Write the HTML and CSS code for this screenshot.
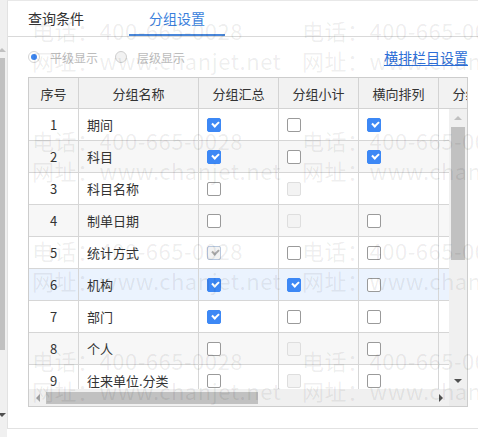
FILE: index.html
```html
<!DOCTYPE html>
<html lang="zh">
<head>
<meta charset="utf-8">
<title>分组设置</title>
<link rel="stylesheet" href="styles.css">
</head>
<body>
<div class="app">
  <div class="side">
    <div class="tri tri-up light"></div>
    <div class="side-thumb"></div>
    <div class="tri tri-down dark side-down"></div>
  </div>
  <div class="panel">
    <div class="tabs">
      <div class="tab">查询条件</div>
      <div class="tab active">分组设置</div>
    </div>
    <div class="content">
      <div class="toolbar">
        <div class="radio checked"><span class="ring"></span>平级显示</div>
        <div class="radio"><span class="ring"></span>层级显示</div>
        <a class="link">横排栏目设置</a>
      </div>
      <div class="grid">
        <div class="head">
          <div class="hc">序号</div>
          <div class="hc">分组名称</div>
          <div class="hc">分组汇总</div>
          <div class="hc">分组小计</div>
          <div class="hc">横向排列</div>
          <div class="hc">分组排序</div>
        </div>
        <div class="body">
          <div class="main">
            <div class="viewport">
              <div class="row">
                <div class="c num">1</div><div class="c name">期间</div>
                <div class="c ck"><span class="cb on"></span></div>
                <div class="c ck"><span class="cb"></span></div>
                <div class="c ck"><span class="cb on"></span></div>
                <div class="c"></div>
              </div>
              <div class="row alt">
                <div class="c num">2</div><div class="c name">科目</div>
                <div class="c ck"><span class="cb on"></span></div>
                <div class="c ck"><span class="cb"></span></div>
                <div class="c ck"><span class="cb on"></span></div>
                <div class="c"></div>
              </div>
              <div class="row">
                <div class="c num">3</div><div class="c name">科目名称</div>
                <div class="c ck"><span class="cb"></span></div>
                <div class="c ck"><span class="cb dis"></span></div>
                <div class="c ck"></div>
                <div class="c"></div>
              </div>
              <div class="row alt">
                <div class="c num">4</div><div class="c name">制单日期</div>
                <div class="c ck"><span class="cb"></span></div>
                <div class="c ck"><span class="cb dis"></span></div>
                <div class="c ck"><span class="cb"></span></div>
                <div class="c"></div>
              </div>
              <div class="row">
                <div class="c num">5</div><div class="c name">统计方式</div>
                <div class="c ck"><span class="cb dis-on"></span></div>
                <div class="c ck"><span class="cb"></span></div>
                <div class="c ck"><span class="cb"></span></div>
                <div class="c"></div>
              </div>
              <div class="row sel">
                <div class="c num">6</div><div class="c name">机构</div>
                <div class="c ck"><span class="cb on"></span></div>
                <div class="c ck"><span class="cb on"></span></div>
                <div class="c ck"><span class="cb"></span></div>
                <div class="c"></div>
              </div>
              <div class="row">
                <div class="c num">7</div><div class="c name">部门</div>
                <div class="c ck"><span class="cb on"></span></div>
                <div class="c ck"><span class="cb"></span></div>
                <div class="c ck"><span class="cb"></span></div>
                <div class="c"></div>
              </div>
              <div class="row alt">
                <div class="c num">8</div><div class="c name">个人</div>
                <div class="c ck"><span class="cb"></span></div>
                <div class="c ck"><span class="cb dis"></span></div>
                <div class="c ck"><span class="cb"></span></div>
                <div class="c"></div>
              </div>
              <div class="row">
                <div class="c num">9</div><div class="c name">往来单位.分类</div>
                <div class="c ck"><span class="cb"></span></div>
                <div class="c ck"><span class="cb dis"></span></div>
                <div class="c ck"><span class="cb"></span></div>
                <div class="c"></div>
              </div>
            </div>
            <div class="vscroll">
              <div class="btn"><span class="tri tri-up light"></span></div>
              <div class="vthumb"></div>
              <div class="btn vdown"><span class="tri tri-down dark"></span></div>
            </div>
          </div>
          <div class="hscroll">
            <div class="htrack">
              <div class="btn hbtn"><span class="tri tri-left mid"></span></div>
              <div class="hthumb"></div>
              <div class="btn hbtn hright"><span class="tri tri-right dark"></span></div>
            </div>
            <div class="corner"></div>
          </div>
        </div>
      </div>
    </div>
  </div>
</div>
<div class="watermark">
  <div class="wm"><div>电话：400-665-0028</div><div>网址：www.chanjet.net</div></div>
  <div class="wm"><div>电话：400-665-0028</div><div>网址：www.chanjet.net</div></div>
  <div class="wm"><div>电话：400-665-0028</div><div>网址：www.chanjet.net</div></div>
  <div class="wm"><div>电话：400-665-0028</div><div>网址：www.chanjet.net</div></div>
  <div class="wm"><div>电话：400-665-0028</div><div>网址：www.chanjet.net</div></div>
  <div class="wm"><div>电话：400-665-0028</div><div>网址：www.chanjet.net</div></div>
  <div class="wm"><div>电话：400-665-0028</div><div>网址：www.chanjet.net</div></div>
  <div class="wm"><div>电话：400-665-0028</div><div>网址：www.chanjet.net</div></div>
</div>
</body>
</html>
```

FILE: styles.css
```css
* { box-sizing: border-box; }
html, body {
  margin: 0;
  padding: 0;
  width: 478px;
  height: 437px;
  overflow: hidden;
  background: #fff;
  font-family: "Noto Sans CJK SC", "Noto Sans", sans-serif;
  color: #333;
}
.app {
  display: flex;
  height: 437px;
  position: relative;
}
.side {
  width: 7px;
  flex: none;
  background: #f0f0f0;
  display: flex;
  flex-direction: column;
  padding-top: 48px;
}
.side .tri { margin-left: -2px; }
.side-thumb {
  width: 5px;
  height: 292px;
  margin-top: 6px;
  background: #c1c1c1;
}
.side-down { margin-top: 63px; }

.tri { display: block; width: 0; height: 0; }
.tri-up { border-left: 4px solid transparent; border-right: 4px solid transparent; border-bottom: 4px solid #bbb; }
.tri-down { border-left: 4px solid transparent; border-right: 4px solid transparent; border-top: 4px solid #505050; }
.tri-left { border-top: 4px solid transparent; border-bottom: 4px solid transparent; border-right: 4px solid #a0a0a0; }
.tri-right { border-top: 4px solid transparent; border-bottom: 4px solid transparent; border-left: 4px solid #505050; }
.tri-up.light { border-bottom-color: #c0c0c0; }
.tri-down.dark { border-top-color: #505050; }
.tri-left.mid { border-right-color: #a3a3a3; }
.tri-right.dark { border-left-color: #505050; }

.panel {
  width: 471px;
  height: 429px;
  border-left: 1px solid #e2e2e2;
  border-top: 1px solid #e8e8e8;
  border-bottom: 1px solid #e2e2e2;
  display: flex;
  flex-direction: column;
}
.tabs {
  height: 36px;
  border-bottom: 1px solid #d9d9d9;
  display: flex;
  gap: 25px;
  flex: none;
}
.tab {
  padding: 0 20px;
  font-size: 14px;
  line-height: 35px;
  height: 35px;
  color: #333;
}
.tab.active {
  color: #3a7fdc;
  box-shadow: inset 0 -2px 0 #4a87d9;
}
.content {
  padding: 0 10px 0 20px;
}
.toolbar {
  height: 40px;
  display: flex;
  align-items: center;
  font-size: 12px;
}
.radio {
  display: flex;
  align-items: center;
  gap: 10px;
  color: #bcbcbc;
  margin-right: 17px;
}
.ring {
  width: 12px;
  height: 12px;
  border-radius: 50%;
  border: 1px solid #cfcfcf;
  background: #f2f2f2;
  display: flex;
  align-items: center;
  justify-content: center;
}
.radio.checked .ring { background: #fff; border-color: #d5d5d5; }
.radio.checked .ring::after {
  content: "";
  width: 6px;
  height: 6px;
  border-radius: 50%;
  background: #3d86f0;
}
.link {
  margin-left: auto;
  font-size: 14px;
  color: #2e6fd7;
  text-decoration: underline;
  text-underline-offset: 2px;
}
.grid {
  width: 440px;
  border: 1px solid #cdcdcd;
}
.head {
  display: grid;
  grid-template-columns: 50px 120px 80px 80px 80px 80px;
  height: 31px;
  background: #f2f2f2;
  border-bottom: 1px solid #d3d3d3;
  overflow: hidden;
  font-size: 13px;
}
.hc {
  border-right: 1px solid #d3d3d3;
  display: flex;
  align-items: center;
  justify-content: center;
  color: #333;
  white-space: nowrap;
}
.main {
  display: flex;
  height: 280px;
}
.viewport {
  width: 420px;
  overflow: hidden;
}
.row {
  display: grid;
  grid-template-columns: 50px 120px 80px 80px 80px 80px;
  height: 32px;
  border-bottom: 1px solid #d6d6d6;
  font-size: 13px;
  width: 490px;
}
.row.alt { background: #f7f7f7; }
.row.sel { background: #ebf3fe; }
.c {
  border-right: 1px solid #d6d6d6;
  display: flex;
  align-items: center;
  white-space: nowrap;
}
.num { justify-content: center; }
.name { padding-left: 8px; }
.ck { padding-left: 8px; }
.cb {
  width: 14px;
  height: 14px;
  border: 1px solid #9a9a9a;
  border-radius: 2px;
  background: #fff;
  position: relative;
}
.cb.on {
  background: #3d88f5;
  border-color: #3d88f5;
}
.cb.on::after, .cb.dis-on::after {
  content: "";
  position: absolute;
  left: 3.5px;
  top: 2.5px;
  width: 5px;
  height: 3px;
  border-left: 2px solid #fff;
  border-bottom: 2px solid #fff;
  transform: rotate(-45deg);
}
.cb.dis {
  background: #f3f3f3;
  border-color: #dedede;
}
.cb.dis-on {
  background: #f3f3f3;
  border-color: #b9c8de;
}
.cb.dis-on::after { border-color: #a9a9a9; }

.vscroll {
  width: 18px;
  background: #f0f0f0;
  display: flex;
  flex-direction: column;
  align-items: center;
}
.btn {
  height: 17px;
  flex: none;
  display: flex;
  align-items: center;
  justify-content: center;
}
.vscroll .btn { width: 18px; }
.vthumb {
  width: 14px;
  height: 133px;
  margin-top: 1px;
  background: #c1c1c1;
}
.vdown { margin-top: auto; }
.hscroll {
  display: flex;
  height: 17px;
}
.htrack {
  width: 420px;
  background: #f0f0f0;
  display: flex;
  align-items: center;
}
.hbtn { width: 17px; height: 17px; }
.hthumb {
  width: 212px;
  height: 12px;
  background: #c1c1c1;
}
.hright { margin-left: auto; }
.corner {
  width: 18px;
  background: #ebebeb;
}

.watermark {
  position: absolute;
  left: 32px;
  top: 15px;
  display: grid;
  grid-template-columns: 270px 270px;
  grid-auto-rows: 110px;
  pointer-events: none;
  font-size: 22px;
  line-height: 30px;
  color: rgba(0, 0, 0, 0.075);
  white-space: nowrap;
  letter-spacing: 0.5px;
}
```
